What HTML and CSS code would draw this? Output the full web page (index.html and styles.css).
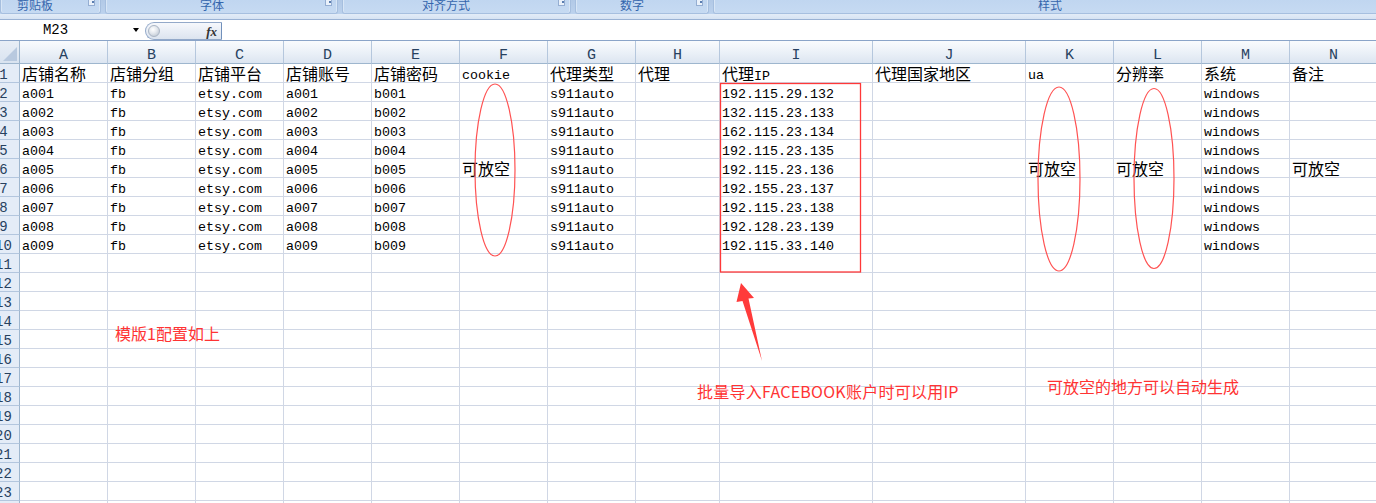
FILE: index.html
```html
<!DOCTYPE html>
<html lang="zh-CN">
<head>
<meta charset="utf-8">
<title>店铺模版</title>
<link rel="stylesheet" href="styles.css">
</head>
<body>
<div class="ribbon">
  <div class="grp g1"><span class="lbl">剪贴板</span><span class="launch"></span></div>
  <div class="grp g2"><span class="lbl">字体</span><span class="launch"></span></div>
  <div class="grp g3"><span class="lbl">对齐方式</span><span class="launch"></span></div>
  <div class="grp g4"><span class="lbl">数字</span><span class="launch"></span></div>
  <div class="grp g5"><span class="lbl">样式</span></div>
</div>
<div class="band"></div>
<div class="fbar">
  <div class="namebox"><span class="nametext">M23</span><span class="dd"></span></div>
  <div class="pill"><span class="orb"></span><span class="fx">fx</span></div>
  <div class="finput"></div>
</div>
<div class="sheet">
  <div class="colhead">
    <div class="corner"><span class="tri"></span></div>
    <div class="ch">A</div><div class="ch">B</div><div class="ch">C</div><div class="ch">D</div><div class="ch">E</div><div class="ch">F</div><div class="ch">G</div><div class="ch">H</div><div class="ch">I</div><div class="ch">J</div><div class="ch">K</div><div class="ch">L</div><div class="ch">M</div><div class="ch">N</div>
  </div>
  <div class="row"><div class="rh"><span>1</span></div><div class="c">店铺名称</div><div class="c">店铺分组</div><div class="c">店铺平台</div><div class="c">店铺账号</div><div class="c">店铺密码</div><div class="c m">cookie</div><div class="c">代理类型</div><div class="c">代理</div><div class="c">代理<span class="mi">IP</span></div><div class="c">代理国家地区</div><div class="c m">ua</div><div class="c">分辨率</div><div class="c">系统</div><div class="c">备注</div></div>
  <div class="row"><div class="rh"><span>2</span></div><div class="c m">a001</div><div class="c m">fb</div><div class="c m">etsy.com</div><div class="c m">a001</div><div class="c m">b001</div><div class="c"></div><div class="c m">s911auto</div><div class="c"></div><div class="c m">192.115.29.132</div><div class="c"></div><div class="c"></div><div class="c"></div><div class="c m">windows</div><div class="c"></div></div>
  <div class="row"><div class="rh"><span>3</span></div><div class="c m">a002</div><div class="c m">fb</div><div class="c m">etsy.com</div><div class="c m">a002</div><div class="c m">b002</div><div class="c"></div><div class="c m">s911auto</div><div class="c"></div><div class="c m">132.115.23.133</div><div class="c"></div><div class="c"></div><div class="c"></div><div class="c m">windows</div><div class="c"></div></div>
  <div class="row"><div class="rh"><span>4</span></div><div class="c m">a003</div><div class="c m">fb</div><div class="c m">etsy.com</div><div class="c m">a003</div><div class="c m">b003</div><div class="c"></div><div class="c m">s911auto</div><div class="c"></div><div class="c m">162.115.23.134</div><div class="c"></div><div class="c"></div><div class="c"></div><div class="c m">windows</div><div class="c"></div></div>
  <div class="row"><div class="rh"><span>5</span></div><div class="c m">a004</div><div class="c m">fb</div><div class="c m">etsy.com</div><div class="c m">a004</div><div class="c m">b004</div><div class="c"></div><div class="c m">s911auto</div><div class="c"></div><div class="c m">192.115.23.135</div><div class="c"></div><div class="c"></div><div class="c"></div><div class="c m">windows</div><div class="c"></div></div>
  <div class="row"><div class="rh"><span>6</span></div><div class="c m">a005</div><div class="c m">fb</div><div class="c m">etsy.com</div><div class="c m">a005</div><div class="c m">b005</div><div class="c">可放空</div><div class="c m">s911auto</div><div class="c"></div><div class="c m">192.115.23.136</div><div class="c"></div><div class="c">可放空</div><div class="c">可放空</div><div class="c m">windows</div><div class="c">可放空</div></div>
  <div class="row"><div class="rh"><span>7</span></div><div class="c m">a006</div><div class="c m">fb</div><div class="c m">etsy.com</div><div class="c m">a006</div><div class="c m">b006</div><div class="c"></div><div class="c m">s911auto</div><div class="c"></div><div class="c m">192.155.23.137</div><div class="c"></div><div class="c"></div><div class="c"></div><div class="c m">windows</div><div class="c"></div></div>
  <div class="row"><div class="rh"><span>8</span></div><div class="c m">a007</div><div class="c m">fb</div><div class="c m">etsy.com</div><div class="c m">a007</div><div class="c m">b007</div><div class="c"></div><div class="c m">s911auto</div><div class="c"></div><div class="c m">192.115.23.138</div><div class="c"></div><div class="c"></div><div class="c"></div><div class="c m">windows</div><div class="c"></div></div>
  <div class="row"><div class="rh"><span>9</span></div><div class="c m">a008</div><div class="c m">fb</div><div class="c m">etsy.com</div><div class="c m">a008</div><div class="c m">b008</div><div class="c"></div><div class="c m">s911auto</div><div class="c"></div><div class="c m">192.128.23.139</div><div class="c"></div><div class="c"></div><div class="c"></div><div class="c m">windows</div><div class="c"></div></div>
  <div class="row"><div class="rh"><span>10</span></div><div class="c m">a009</div><div class="c m">fb</div><div class="c m">etsy.com</div><div class="c m">a009</div><div class="c m">b009</div><div class="c"></div><div class="c m">s911auto</div><div class="c"></div><div class="c m">192.115.33.140</div><div class="c"></div><div class="c"></div><div class="c"></div><div class="c m">windows</div><div class="c"></div></div>
  <div class="row"><div class="rh"><span>11</span></div><div class="c"></div><div class="c"></div><div class="c"></div><div class="c"></div><div class="c"></div><div class="c"></div><div class="c"></div><div class="c"></div><div class="c"></div><div class="c"></div><div class="c"></div><div class="c"></div><div class="c"></div><div class="c"></div></div>
  <div class="row"><div class="rh"><span>12</span></div><div class="c"></div><div class="c"></div><div class="c"></div><div class="c"></div><div class="c"></div><div class="c"></div><div class="c"></div><div class="c"></div><div class="c"></div><div class="c"></div><div class="c"></div><div class="c"></div><div class="c"></div><div class="c"></div></div>
  <div class="row"><div class="rh"><span>13</span></div><div class="c"></div><div class="c"></div><div class="c"></div><div class="c"></div><div class="c"></div><div class="c"></div><div class="c"></div><div class="c"></div><div class="c"></div><div class="c"></div><div class="c"></div><div class="c"></div><div class="c"></div><div class="c"></div></div>
  <div class="row"><div class="rh"><span>14</span></div><div class="c"></div><div class="c"></div><div class="c"></div><div class="c"></div><div class="c"></div><div class="c"></div><div class="c"></div><div class="c"></div><div class="c"></div><div class="c"></div><div class="c"></div><div class="c"></div><div class="c"></div><div class="c"></div></div>
  <div class="row"><div class="rh"><span>15</span></div><div class="c"></div><div class="c"></div><div class="c"></div><div class="c"></div><div class="c"></div><div class="c"></div><div class="c"></div><div class="c"></div><div class="c"></div><div class="c"></div><div class="c"></div><div class="c"></div><div class="c"></div><div class="c"></div></div>
  <div class="row"><div class="rh"><span>16</span></div><div class="c"></div><div class="c"></div><div class="c"></div><div class="c"></div><div class="c"></div><div class="c"></div><div class="c"></div><div class="c"></div><div class="c"></div><div class="c"></div><div class="c"></div><div class="c"></div><div class="c"></div><div class="c"></div></div>
  <div class="row"><div class="rh"><span>17</span></div><div class="c"></div><div class="c"></div><div class="c"></div><div class="c"></div><div class="c"></div><div class="c"></div><div class="c"></div><div class="c"></div><div class="c"></div><div class="c"></div><div class="c"></div><div class="c"></div><div class="c"></div><div class="c"></div></div>
  <div class="row"><div class="rh"><span>18</span></div><div class="c"></div><div class="c"></div><div class="c"></div><div class="c"></div><div class="c"></div><div class="c"></div><div class="c"></div><div class="c"></div><div class="c"></div><div class="c"></div><div class="c"></div><div class="c"></div><div class="c"></div><div class="c"></div></div>
  <div class="row"><div class="rh"><span>19</span></div><div class="c"></div><div class="c"></div><div class="c"></div><div class="c"></div><div class="c"></div><div class="c"></div><div class="c"></div><div class="c"></div><div class="c"></div><div class="c"></div><div class="c"></div><div class="c"></div><div class="c"></div><div class="c"></div></div>
  <div class="row"><div class="rh"><span>20</span></div><div class="c"></div><div class="c"></div><div class="c"></div><div class="c"></div><div class="c"></div><div class="c"></div><div class="c"></div><div class="c"></div><div class="c"></div><div class="c"></div><div class="c"></div><div class="c"></div><div class="c"></div><div class="c"></div></div>
  <div class="row"><div class="rh"><span>21</span></div><div class="c"></div><div class="c"></div><div class="c"></div><div class="c"></div><div class="c"></div><div class="c"></div><div class="c"></div><div class="c"></div><div class="c"></div><div class="c"></div><div class="c"></div><div class="c"></div><div class="c"></div><div class="c"></div></div>
  <div class="row"><div class="rh"><span>22</span></div><div class="c"></div><div class="c"></div><div class="c"></div><div class="c"></div><div class="c"></div><div class="c"></div><div class="c"></div><div class="c"></div><div class="c"></div><div class="c"></div><div class="c"></div><div class="c"></div><div class="c"></div><div class="c"></div></div>
  <div class="row"><div class="rh"><span>23</span></div><div class="c"></div><div class="c"></div><div class="c"></div><div class="c"></div><div class="c"></div><div class="c"></div><div class="c"></div><div class="c"></div><div class="c"></div><div class="c"></div><div class="c"></div><div class="c"></div><div class="c"></div><div class="c"></div></div>
  <div class="row"><div class="rh"><span>24</span></div><div class="c"></div><div class="c"></div><div class="c"></div><div class="c"></div><div class="c"></div><div class="c"></div><div class="c"></div><div class="c"></div><div class="c"></div><div class="c"></div><div class="c"></div><div class="c"></div><div class="c"></div><div class="c"></div></div>
</div>

<svg class="marks" width="1376" height="503" viewBox="0 0 1376 503" aria-hidden="true">
  <ellipse cx="495" cy="170" rx="20" ry="86" fill="none" stroke="#ff5252" stroke-width="1.2"/>
  <ellipse cx="1059" cy="179" rx="21" ry="92" fill="none" stroke="#ff5252" stroke-width="1.2"/>
  <ellipse cx="1154" cy="178.5" rx="20" ry="90" fill="none" stroke="#ff5252" stroke-width="1.2"/>
  <rect x="720.5" y="83.5" width="140" height="188.5" fill="none" stroke="#ff3838" stroke-width="1.3"/>
  <polygon points="741,283 754,298 748.5,298.5 762,361 742.5,301 736.5,302" fill="#ff3b3b"/>
</svg>
<div class="note n1">模版1配置如上</div>
<div class="note n2">批量导入FACEBOOK账户时可以用IP</div>
<div class="note n3">可放空的地方可以自动生成</div>
</body>
</html>
```
FILE: styles.css
```css
* { box-sizing: border-box; margin: 0; padding: 0; }
:root {
  --cols: 20px repeat(7, 88px) 84px 153px 153px repeat(4, 88px);
}
html, body { width: 1376px; height: 503px; overflow: hidden; background: #fff; }
body {
  position: relative;
  font-family: "Noto Sans CJK SC", "Noto Sans", sans-serif;
  color: #000;
}

/* ribbon group labels */
.ribbon {
  display: flex;
  gap: 4px;
  height: 14px;
  background: linear-gradient(#b2c9e6, #bcd2ed);
  overflow: hidden;
}
.grp {
  display: flex;
  flex: none;
  height: 14px;
  background: linear-gradient(#c0d6f0, #c6daf2);
  border: 1px solid #a6bfdf;
  border-top: none;
  border-radius: 0 0 3px 3px;
  box-shadow: inset 1px 0 #d8e6f6, inset -1px 0 #d8e6f6;
}
.g1 { width: 101px; }
.g2 { width: 233px; }
.g3 { width: 229px; }
.g4 { width: 134px; }
.g5 { width: 700px; }
.lbl {
  flex: 1;
  text-align: center;
  font-size: 12px;
  line-height: 10px;
  color: #3566ad;
  white-space: nowrap;
}
.g1 .lbl { padding-right: 19px; }
.g2 .lbl { padding-right: 7px; }
.g3 .lbl { padding-right: 9px; }
.g4 .lbl { padding-right: 8px; }
.g5 .lbl { padding-right: 26px; }
.launch {
  flex: none;
  width: 7px;
  height: 6px;
  margin-right: 5px;
  border: 1px solid #95aed2;
  border-top: none;
  background: linear-gradient(#5a7db0, #5a7db0) 3px 1px / 2px 2px no-repeat, #eaf1fa;
}
.band {
  height: 6px;
  background: linear-gradient(#e3ecf7, #d6e3f3);
  border-bottom: 1px solid #9ab2d4;
}

/* formula bar */
.fbar {
  display: flex;
  height: 21px;
  background: #fff;
  border-bottom: 1px solid #8aa4c8;
}
.namebox {
  flex: none;
  width: 145px;
  display: flex;
  align-items: center;
  font-family: "Liberation Mono", monospace;
  font-size: 14px;
}
.nametext { width: 111px; text-align: center; }
.dd {
  width: 0;
  height: 0;
  margin-left: 22px;
  border-left: 3px solid transparent;
  border-right: 3px solid transparent;
  border-top: 4px solid #000;
}
.pill {
  flex: none;
  width: 77px;
  height: 18px;
  margin-top: 2px;
  border: 1px solid #93a9c9;
  border-right-color: #7190bb;
  border-radius: 9px 0 0 9px;
  background: linear-gradient(#f6f8fc, #dce4ef);
  display: flex;
  align-items: center;
  justify-content: space-between;
  padding: 0 4px 0 2px;
}
.orb {
  width: 12px;
  height: 12px;
  border-radius: 50%;
  border: 1px solid #aab5c4;
  background: radial-gradient(circle at 40% 35%, #ffffff 0, #e6eaef 40%, #b3bdca 100%);
}
.fx {
  font-family: "Liberation Serif", serif;
  font-style: italic;
  font-weight: bold;
  font-size: 13px;
  line-height: 1;
  color: #333;
}
.finput { flex: 1; }

/* sheet */
.colhead, .row {
  display: grid;
  grid-template-columns: var(--cols);
}
.colhead { height: 23px; }
.corner {
  background: linear-gradient(#e8eef6, #d9e3f0);
  border-right: 1px solid #9eb6ce;
  border-bottom: 1px solid #9eb6ce;
  display: flex;
  align-items: flex-end;
  justify-content: flex-end;
  padding: 0 2px 2px 0;
}
.tri {
  width: 0;
  height: 0;
  border-left: 14px solid transparent;
  border-bottom: 14px solid #b8c9df;
}
.ch {
  border-right: 1px solid #b5c7dd;
  border-bottom: 1px solid #9eb6ce;
  background: linear-gradient(#f9fbfd, #eaf0f7 55%, #dce5f1);
  text-align: center;
  font-family: "Liberation Mono", monospace;
  font-size: 15px;
  line-height: 14px;
  padding-top: 8px;
  color: #27415f;
}
.row { height: 19px; }
.rh {
  background: #e4ecf7;
  border-right: 1px solid #9eb6ce;
  border-bottom: 1px solid #b3c6de;
  overflow: hidden;
  font-family: "Liberation Mono", monospace;
  font-size: 14px;
  line-height: 15px;
  padding-top: 4px;
  color: #27415f;
}
.rh span {
  display: block;
  width: 29px;
  margin-left: -11px;
  text-align: center;
}
.c {
  border-right: 1px solid #d0d7e5;
  border-bottom: 1px solid #d0d7e5;
  padding-left: 2px;
  font-size: 16px;
  line-height: 18px;
  white-space: nowrap;
  overflow: hidden;
}
.c.m {
  font-family: "Liberation Mono", monospace;
  font-size: 13.33px;
  line-height: 15px;
  padding-top: 4px;
}
.mi {
  font-family: "Liberation Mono", monospace;
  font-size: 13.33px;
  line-height: 0;
}

/* red annotations over the sheet */
.marks {
  position: absolute;
  left: 0;
  top: 0;
  pointer-events: none;
}
.note {
  position: absolute;
  font-size: 16px;
  line-height: 16px;
  color: #ff3333;
  white-space: nowrap;
}
.n1 { left: 115px; top: 325px; }
.n2 { left: 697px; top: 383px; letter-spacing: 0.25px; }
.n3 { left: 1047px; top: 378px; }
```
